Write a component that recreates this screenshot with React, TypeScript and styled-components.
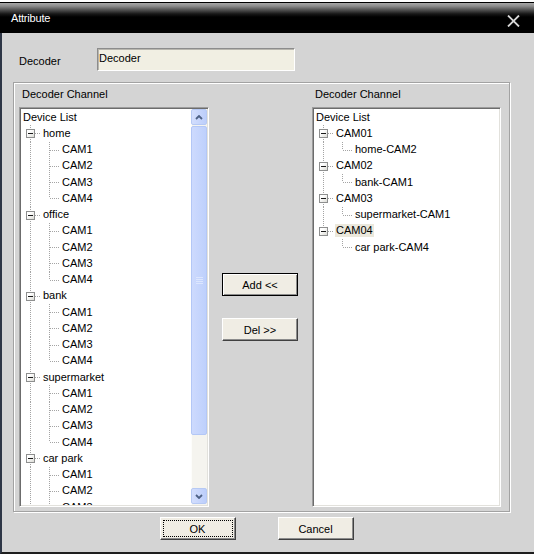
import React from 'react';
import styled, { createGlobalStyle, css } from 'styled-components';

// --- data ---
interface TreeItem {
  label: string;
  children: string[];
  selected?: boolean;
}

const CAMS = ['CAM1', 'CAM2', 'CAM3', 'CAM4'];

const SOURCE_TREE: TreeItem[] = ['home', 'office', 'bank', 'supermarket', 'car park'].map((label) => ({
  label,
  children: CAMS,
}));

const TARGET_TREE: TreeItem[] = [
  { label: 'CAM01', children: ['home-CAM2'] },
  { label: 'CAM02', children: ['bank-CAM1'] },
  { label: 'CAM03', children: ['supermarket-CAM1'] },
  { label: 'CAM04', children: ['car park-CAM4'], selected: true },
];

// --- styles ---
const GlobalStyle = createGlobalStyle`
  html, body {
    margin: 0;
    padding: 0;
    background: #d4d4d4;
  }
  body {
    font-family: 'Liberation Sans', Arial, sans-serif;
    font-size: 11px;
    color: #000;
  }
`;

const Window = styled.div`
  width: 534px;
  height: 554px;
  display: flex;
  flex-direction: column;
  overflow: hidden;
`;

const BackStrip = styled.div`
  height: 2px;
  background: #ffffff;
  border-bottom: 1px solid #000;
  flex: none;
`;

const TitleBar = styled.div`
  flex: none;
  height: 30px;
  display: flex;
  align-items: center;
  justify-content: space-between;
  padding: 0 14px 0 11px;
  background: linear-gradient(to bottom, #a8a8a8 0px, #8e8e8e 3px, #505050 7px, #161616 11px, #000 14px, #000 100%);
  color: #ffffff;
`;

const TitleText = styled.span`
  font-size: 11px;
  letter-spacing: -0.2px;
`;

const CloseIcon = styled.svg`
  margin-top: 6px;
  display: block;
`;

const Body = styled.div`
  flex: 1;
  display: flex;
  flex-direction: column;
  background: #d4d4d4;
  border-left: 2px solid #2e3646;
  border-bottom: 2px solid #1e1e1e;
  padding: 15px 24px 0 11px;
`;

const DecoderRow = styled.div`
  display: flex;
  align-items: center;
  height: 23px;
  padding-left: 6px;
`;

const FieldLabel = styled.span`
  width: 78px;
  padding-top: 2px;
`;

const TextField = styled.input`
  box-sizing: border-box;
  width: 198px;
  height: 23px;
  margin: 0;
  padding: 0 0 3px 1px;
  font-family: 'Liberation Sans', Arial, sans-serif;
  font-size: 11px;
  color: #000;
  background: #f1efe3;
  border: 1px solid;
  border-color: #8c8c8c #ffffff #ffffff #8c8c8c;
  box-shadow: inset 1px 1px 0 #b8b6ae;
  outline: none;
`;

const GroupBox = styled.div`
  box-sizing: border-box;
  margin-top: 11px;
  height: 430px;
  border: 1px solid #a2a2a2;
  box-shadow: inset 1px 1px 0 #ffffff, 1px 1px 0 #ffffff;
  padding: 0 8px 4px 5px;
  display: grid;
  grid-template-columns: 190px 1fr 189px;
  grid-template-rows: 24px 1fr;
`;

const ColumnTitle = styled.span`
  display: flex;
  align-items: center;
  padding: 0 0 3px 3px;
`;

const ListBox = styled.div`
  box-sizing: border-box;
  height: 400px;
  display: flex;
  background: #ffffff;
  border: 1px solid;
  border-color: #9c9c9c #ffffff #ffffff #9c9c9c;
  box-shadow: inset 1px 1px 0 #6c6c6c, inset -1px -1px 0 #e2e1dc;
  padding: 1px;
  overflow: hidden;
`;

const TreeArea = styled.div`
  flex: 1;
  overflow: hidden;
`;

const Row = styled.div`
  display: flex;
  align-items: center;
  height: 16.25px;
  white-space: nowrap;
`;

type Stem = 'none' | 'full' | 'upper';

const dotsV = css`
  background-image: linear-gradient(to bottom, #a4a4a4 50%, transparent 50%);
  background-size: 1px 2px;
`;

const dotsH = css`
  background-image: linear-gradient(to right, #a4a4a4 50%, transparent 50%);
  background-size: 2px 1px;
`;

const Gutter = styled.span<{ $w: number; $x: number; $stem: Stem; $branch?: boolean }>`
  position: relative;
  flex: none;
  width: ${({ $w }) => $w}px;
  align-self: stretch;

  &::before {
    content: '';
    display: ${({ $stem }) => ($stem === 'none' ? 'none' : 'block')};
    position: absolute;
    left: ${({ $x }) => $x}px;
    top: 0;
    width: 1px;
    height: ${({ $stem }) => ($stem === 'upper' ? '50%' : '100%')};
    ${dotsV}
  }

  &::after {
    content: '';
    display: ${({ $branch }) => ($branch ? 'block' : 'none')};
    position: absolute;
    left: ${({ $x }) => $x + 1}px;
    right: 0;
    top: 8px;
    height: 1px;
    ${dotsH}
  }
`;

const Expander = styled.span<{ $x: number }>`
  position: absolute;
  z-index: 1;
  left: ${({ $x }) => $x - 4}px;
  top: 4px;
  box-sizing: border-box;
  width: 9px;
  height: 9px;
  border: 1px solid #8e8f8f;
  background: linear-gradient(135deg, #ffffff 30%, #dcdcd6);
  display: flex;
  align-items: center;
  justify-content: center;

  &::before {
    content: '';
    width: 5px;
    height: 1px;
    background: #1a1a1a;
  }
`;

const NodeLabel = styled.span<{ $selected?: boolean }>`
  padding: 0 1px;
  margin-left: 1px;
  line-height: 13px;
  background: ${({ $selected }) => ($selected ? '#ebe8dc' : 'transparent')};
`;

const ScrollBar = styled.div`
  flex: none;
  width: 16px;
  display: flex;
  flex-direction: column;
  gap: 1px;
  padding-bottom: 1px;
  background: #f5f4ef;
  box-shadow: inset 1px 0 0 #fdfdfb;
`;

const ArrowButton = styled.div`
  box-sizing: border-box;
  flex: none;
  height: 16px;
  border: 1px solid #b6c9f4;
  border-radius: 2px;
  background: linear-gradient(to right, #d3defd, #bccefb);
  display: flex;
  align-items: center;
  justify-content: center;
`;

const Thumb = styled.div`
  box-sizing: border-box;
  flex: none;
  height: 309px;
  border: 1px solid #b3c7f6;
  border-radius: 2px;
  background: linear-gradient(to right, #cddafd, #bed0fc);
  display: flex;
  align-items: center;
  justify-content: center;
`;

const Track = styled.div`
  flex: 1;
`;

const MiddleColumn = styled.div`
  display: flex;
  flex-direction: column;
  align-items: center;
  justify-content: center;
  gap: 22px;
  padding-right: 1px;
`;

const PushButton = styled.button<{ $default?: boolean; $focused?: boolean }>`
  box-sizing: border-box;
  width: 76px;
  height: 23px;
  margin: 0;
  padding: 0;
  font-family: 'Liberation Sans', Arial, sans-serif;
  font-size: 11px;
  color: #000;
  background: #f0ede4;
  border: 1px solid;
  border-color: #ffffff #404040 #404040 #ffffff;
  box-shadow: inset -1px -1px 0 #8c8c8c;
  cursor: pointer;

  ${({ $default }) =>
    $default &&
    css`
      border-color: #000;
      box-shadow: inset 1px 1px 0 #ffffff, inset -1px -1px 0 #8c8c8c;
    `}

  ${({ $focused }) =>
    $focused &&
    css`
      outline: 1px dotted #000;
      outline-offset: -4px;
    `}
`;

const Footer = styled.div`
  display: flex;
  justify-content: center;
  gap: 42px;
  margin-top: 5px;
  padding-right: 10px;
`;

// --- parts ---
const Chevron: React.FC<{ down?: boolean }> = ({ down }) => (
  <svg width="8" height="5" viewBox="0 0 8 5">
    <polyline
      points={down ? '1,1 4,4 7,1' : '1,4 4,1 7,4'}
      fill="none"
      stroke="#4d6185"
      strokeWidth="1.8"
    />
  </svg>
);

const Tree: React.FC<{ items: TreeItem[]; clipped?: boolean }> = ({ items, clipped }) => (
  <TreeArea>
    <Row>
      <NodeLabel>Device List</NodeLabel>
    </Row>
    {items.map((item, i) => {
      const lastRoot = i === items.length - 1 && !clipped;
      return (
        <React.Fragment key={item.label}>
          <Row>
            <Gutter $w={20} $x={9} $stem={lastRoot ? 'upper' : 'full'} $branch>
              <Expander $x={9} />
            </Gutter>
            <NodeLabel $selected={item.selected}>{item.label}</NodeLabel>
          </Row>
          {item.children.map((child, j) => (
            <Row key={child}>
              <Gutter $w={20} $x={9} $stem={lastRoot ? 'none' : 'full'} />
              <Gutter $w={19} $x={8} $stem={j === item.children.length - 1 ? 'upper' : 'full'} $branch />
              <NodeLabel>{child}</NodeLabel>
            </Row>
          ))}
        </React.Fragment>
      );
    })}
  </TreeArea>
);

const App: React.FC = () => (
  <Window>
    <GlobalStyle />
    <BackStrip />
    <TitleBar>
      <TitleText>Attribute</TitleText>
      <CloseIcon width="13" height="12" viewBox="0 0 13 12">
        <path d="M1 0.5 L12 11.5 M12 0.5 L1 11.5" stroke="#d8d8d8" strokeWidth="1.8" />
      </CloseIcon>
    </TitleBar>

    <Body>
      <DecoderRow>
        <FieldLabel>Decoder</FieldLabel>
        <TextField readOnly value="Decoder" />
      </DecoderRow>

      <GroupBox>
        <ColumnTitle>Decoder Channel</ColumnTitle>
        <span />
        <ColumnTitle>Decoder Channel</ColumnTitle>

        <ListBox>
          <Tree items={SOURCE_TREE} clipped />
          <ScrollBar>
            <ArrowButton>
              <Chevron />
            </ArrowButton>
            <Thumb>
              <svg width="7" height="8" viewBox="0 0 7 8">
                {[0, 2, 4, 6].map((y) => (
                  <line key={y} x1="0" y1={y + 0.5} x2="7" y2={y + 0.5} stroke="#dce6fe" strokeWidth="1" />
                ))}
              </svg>
            </Thumb>
            <Track />
            <ArrowButton>
              <Chevron down />
            </ArrowButton>
          </ScrollBar>
        </ListBox>

        <MiddleColumn>
          <PushButton $default>Add &lt;&lt;</PushButton>
          <PushButton>Del &gt;&gt;</PushButton>
        </MiddleColumn>

        <ListBox>
          <Tree items={TARGET_TREE} />
        </ListBox>
      </GroupBox>

      <Footer>
        <PushButton $focused>OK</PushButton>
        <PushButton>Cancel</PushButton>
      </Footer>
    </Body>
  </Window>
);

export default App;
